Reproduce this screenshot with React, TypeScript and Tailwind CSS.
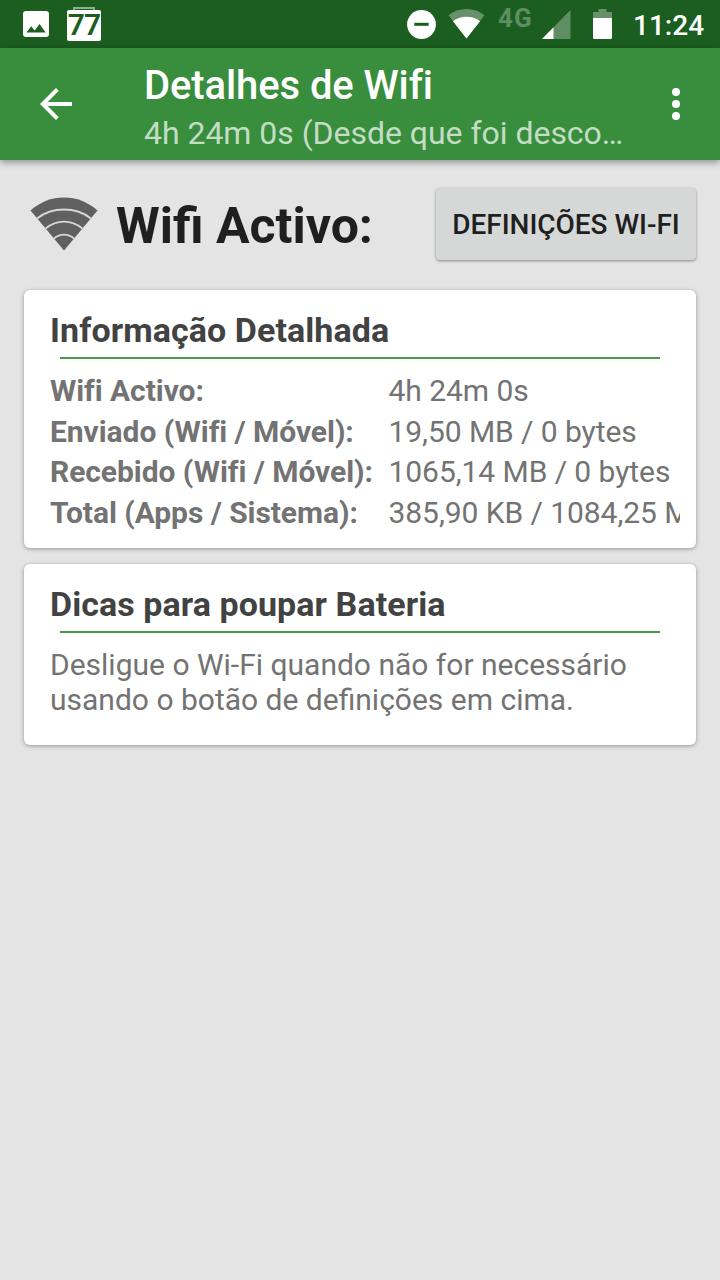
import type { ReactNode } from "react";

const details = [
  { label: "Wifi Activo:", value: "4h 24m 0s" },
  { label: "Enviado (Wifi / Móvel):", value: "19,50 MB / 0 bytes" },
  { label: "Recebido (Wifi / Móvel):", value: "1065,14 MB / 0 bytes" },
  { label: "Total (Apps / Sistema):", value: "385,90 KB / 1084,25 MB" },
];

function StatusBar() {
  return (
    <div className="flex h-12 items-start bg-[#1b5e20] text-white">
      <svg className="mt-[11px] ml-[23px] h-[26px] w-[26px]" viewBox="0 0 26 26">
        <rect width="26" height="26" rx="3" fill="#fff" />
        <path d="M3.500 21.500 8.200 15.300 11.700 19.400 16.500 13 22.700 21.500Z" fill="#1b5e20" />
      </svg>
      <div className="mt-[7px] ml-[18px] flex w-[34px] flex-col items-center">
        <div className="h-[3px] w-[22px] border-2 border-b-0 border-[#8db08f]" />
        <div className="flex h-[31px] w-[34px] items-center justify-center rounded-[2px] bg-white pb-[2px] text-[30px] leading-none font-semibold tracking-[-0.8px] text-[#1b5e20]">
          77
        </div>
      </div>

      <svg className="mt-[10px] ml-auto h-[29px] w-[29px]" viewBox="0 0 29 29">
        <circle cx="14.5" cy="14.5" r="14.4" fill="#fff" />
        <rect x="7.3" y="12.8" width="14.4" height="3" fill="#1b5e20" />
      </svg>
      <svg className="mt-[9px] ml-[12px] h-[30px] w-[37px]" viewBox="0 0 37 30">
        <path d="M.5 6.2C11-2 26-2 36.500 6.200L18.500 29.500Z" fill="#689169" />
        <path d="M5 12.200C13 6.300 24 6.300 32 12.200L18.500 29.500Z" fill="#fff" />
      </svg>
      <span className="mt-[5px] ml-[13px] w-[35px] text-[26px] leading-[26px] font-bold tracking-[1px] text-[#5f8e63]">4G</span>
      <svg className="mt-[10px] ml-[9px] h-[29px] w-[29px]" viewBox="0 0 29 29">
        <path d="M28.500 0V29H0Z" fill="#5f8e63" />
        <path d="M11.500 17.300V29H0Z" fill="#fff" />
      </svg>
      <svg className="mt-[9px] ml-[22px] h-[30px] w-[19px]" viewBox="0 0 19 30">
        <path d="M5.500 0H13.500V3H19V9H0V3H5.500Z" fill="#689169" />
        <path d="M0 9H19V28.500Q19 30 17.500 30H1.500Q0 30 0 28.500Z" fill="#fff" />
      </svg>
      <span className="mr-4 ml-[21px] w-[71px] text-[28px] leading-[52px] font-medium whitespace-nowrap">11:24</span>
    </div>
  );
}

function Toolbar() {
  return (
    <header className="flex h-28 bg-[#388e3c] text-white shadow-[0_2px_7px_rgba(0,0,0,0.4)]">
      <svg className="mt-10 ml-10 h-8 w-8" viewBox="0 0 32 32" fill="none" stroke="#fff" strokeWidth="4">
        <path d="M32 16H3M17.400 1.400 2.800 16 17.400 30.600" />
      </svg>
      <div className="ml-[72px] w-[488px] pt-[14px]">
        <h1 className="text-[40px] leading-[48px] font-medium tracking-[-0.1px]">Detalhes de Wifi</h1>
        <p className="truncate text-[32px] leading-[46px] tracking-[-0.03px] text-[#c3ddc4]">4h 24m 0s (Desde que foi desco…</p>
      </div>
      <svg className="mt-10 ml-10 h-8 w-2" viewBox="0 0 8 32" fill="#fff">
        <circle cx="4" cy="4" r="4" />
        <circle cx="4" cy="16" r="4" />
        <circle cx="4" cy="28" r="4" />
      </svg>
    </header>
  );
}

function WifiIcon() {
  return (
    <svg className="h-[54px] w-[68px]" viewBox="0 0 68 54">
      <path d="M.5 13.500C19-4 49-4 67.500 13.500L34 53.500Z" fill="#606060" />
      <g fill="none" stroke="#d6d6d6" strokeWidth="1.8">
        <path d="M7 21.500C22 9.500 46 9.500 61 21.500" />
        <path d="M15.500 31.500C27 22.300 41 22.300 52.500 31.500" />
        <path d="M24 41.500C30 36.300 38 36.300 44 41.500" />
      </g>
    </svg>
  );
}

function Card({ title, children }: { title: string; children: ReactNode }) {
  return (
    <section className="rounded-md bg-white pl-[26px] shadow-[0_1px_4px_rgba(0,0,0,0.35)]">
      <h2 className="pt-[20px] text-[34px] leading-[40px] font-bold tracking-[0.07px] text-[#424242]">{title}</h2>
      <div className="mt-[7px] mr-9 ml-[10px] h-[2px] bg-[#4b994e]" />
      {children}
    </section>
  );
}

export default function App() {
  return (
    <div className="flex h-[1280px] w-[720px] flex-col overflow-hidden bg-[#e4e4e4] font-[Roboto,sans-serif]">
      <StatusBar />
      <Toolbar />
      <div className="flex h-[130px] items-start pr-6 pl-[30px]">
        <div className="mt-[37px]">
          <WifiIcon />
        </div>
        <h2 className="mt-[36px] ml-[18px] text-[50px] leading-[60px] font-bold whitespace-nowrap text-[#1f1f1f]">Wifi Activo:</h2>
        <button className="mt-[28px] ml-auto h-[72px] w-[260px] rounded-[4px] bg-[#d6d8d7] pt-[2px] text-[28px] font-medium tracking-[-0.04px] whitespace-nowrap text-[#1f1f1f] shadow-[0_1px_3px_rgba(0,0,0,0.4)]">
          DEFINIÇÕES WI-FI
        </button>
      </div>
      <main className="flex flex-col gap-4 px-6">
        <Card title="Informação Detalhada">
          <dl className="mt-3 mr-4 h-[177px] text-[30px] leading-[40.670px] tracking-[-0.06px] text-[#737373]">
            {details.map((row) => (
              <div key={row.label} className="flex overflow-hidden whitespace-nowrap">
                <dt className="w-[338.500px] shrink-0 font-bold">{row.label}</dt>
                <dd>{row.value}</dd>
              </div>
            ))}
          </dl>
        </Card>
        <Card title="Dicas para poupar Bateria">
          <p className="mt-[14px] mr-6 h-[98px] text-[30px] leading-[35px] text-[#737373]">
            Desligue o Wi-Fi quando não for necessário
            <br />
            usando o botão de definições em cima.
          </p>
        </Card>
      </main>
    </div>
  );
}
